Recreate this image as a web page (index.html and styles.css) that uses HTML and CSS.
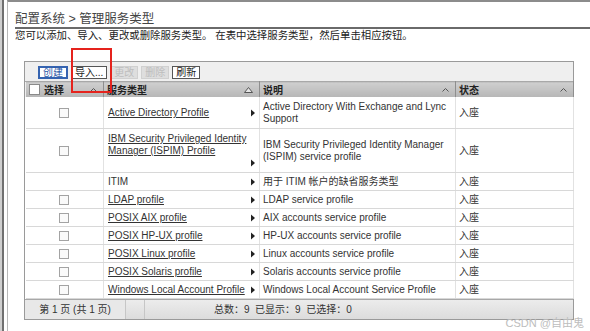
FILE: index.html
```html
<!DOCTYPE html>
<html lang="zh-CN">
<head>
    <meta charset="UTF-8">
    <meta name="viewport" content="width=device-width, initial-scale=1.0">
    <title>管理服务类型</title>
    <link rel="stylesheet" href="styles.css">
</head>
<body>
    <div class="window">
        <div class="frame">
            <div class="pane">
                <h1 class="crumb">配置系统 &gt; 管理服务类型</h1>
                <p class="intro">您可以添加、导入、更改或删除服务类型。 在表中选择服务类型，然后单击相应按钮。</p>

                <div class="services">
                    <div class="toolbar">
                        <button class="btn primary" type="button">创建</button>
                        <button class="btn" type="button">导入...</button>
                        <button class="btn" type="button" disabled>更改</button>
                        <button class="btn" type="button" disabled>删除</button>
                        <button class="btn" type="button">刷新</button>
                    </div>

                    <table class="grid">
                        <colgroup>
                            <col class="c-select">
                            <col class="c-type">
                            <col class="c-desc">
                            <col class="c-state">
                        </colgroup>
                        <thead>
                            <tr>
                                <th><div class="head"><span class="box head-box"></span><span class="head-label">选择</span><svg class="caret" width="7" height="4" viewBox="0 0 7 4"><polyline points="0.5,3.5 3.5,0.5 6.5,3.5" fill="none" stroke="#555" stroke-width="1"/></svg></div></th>
                                <th><div class="head"><span class="head-label">服务类型</span><svg class="caret" width="9" height="6" viewBox="0 0 9 6"><polygon points="0.5,5.5 4.5,0.5 8.5,5.5" fill="#e6e6e6" stroke="#555" stroke-width="1"/></svg></div></th>
                                <th><div class="head"><span class="head-label">说明</span><svg class="caret" width="7" height="4" viewBox="0 0 7 4"><polyline points="0.5,3.5 3.5,0.5 6.5,3.5" fill="none" stroke="#555" stroke-width="1"/></svg></div></th>
                                <th><div class="head"><span class="head-label">状态</span><svg class="caret" width="7" height="4" viewBox="0 0 7 4"><polyline points="0.5,3.5 3.5,0.5 6.5,3.5" fill="none" stroke="#555" stroke-width="1"/></svg></div></th>
                            </tr>
                        </thead>
                        <tbody>
                            <tr class="tall">
                                <td class="pick"><span class="box"></span></td>
                                <td><div class="type"><a href="#">Active Directory Profile</a><svg class="more" width="4" height="12" viewBox="0 0 4 7"><polygon points="0,0 4,3.5 0,7" fill="#222"/></svg></div></td>
                                <td>Active Directory With Exchange and Lync Support</td>
                                <td>入座</td>
                            </tr>
                            <tr class="tall">
                                <td class="pick"><span class="box"></span></td>
                                <td><div class="type"><a href="#">IBM Security Privileged Identity Manager (ISPIM) Profile</a><svg class="more" width="4" height="12" viewBox="0 0 4 7"><polygon points="0,0 4,3.5 0,7" fill="#222"/></svg></div></td>
                                <td>IBM Security Privileged Identity Manager (ISPIM) service profile</td>
                                <td>入座</td>
                            </tr>
                            <tr>
                                <td class="pick"></td>
                                <td><div class="type"><span>ITIM</span><svg class="more" width="4" height="12" viewBox="0 0 4 7"><polygon points="0,0 4,3.5 0,7" fill="#222"/></svg></div></td>
                                <td>用于 ITIM 帐户的缺省服务类型</td>
                                <td>入座</td>
                            </tr>
                            <tr>
                                <td class="pick"><span class="box"></span></td>
                                <td><div class="type"><a href="#">LDAP profile</a><svg class="more" width="4" height="12" viewBox="0 0 4 7"><polygon points="0,0 4,3.5 0,7" fill="#222"/></svg></div></td>
                                <td>LDAP service profile</td>
                                <td>入座</td>
                            </tr>
                            <tr>
                                <td class="pick"><span class="box"></span></td>
                                <td><div class="type"><a href="#">POSIX AIX profile</a><svg class="more" width="4" height="12" viewBox="0 0 4 7"><polygon points="0,0 4,3.5 0,7" fill="#222"/></svg></div></td>
                                <td>AIX accounts service profile</td>
                                <td>入座</td>
                            </tr>
                            <tr>
                                <td class="pick"><span class="box"></span></td>
                                <td><div class="type"><a href="#">POSIX HP-UX profile</a><svg class="more" width="4" height="12" viewBox="0 0 4 7"><polygon points="0,0 4,3.5 0,7" fill="#222"/></svg></div></td>
                                <td>HP-UX accounts service profile</td>
                                <td>入座</td>
                            </tr>
                            <tr>
                                <td class="pick"><span class="box"></span></td>
                                <td><div class="type"><a href="#">POSIX Linux profile</a><svg class="more" width="4" height="12" viewBox="0 0 4 7"><polygon points="0,0 4,3.5 0,7" fill="#222"/></svg></div></td>
                                <td>Linux accounts service profile</td>
                                <td>入座</td>
                            </tr>
                            <tr>
                                <td class="pick"><span class="box"></span></td>
                                <td><div class="type"><a href="#">POSIX Solaris profile</a><svg class="more" width="4" height="12" viewBox="0 0 4 7"><polygon points="0,0 4,3.5 0,7" fill="#222"/></svg></div></td>
                                <td>Solaris accounts service profile</td>
                                <td>入座</td>
                            </tr>
                            <tr>
                                <td class="pick"><span class="box"></span></td>
                                <td><div class="type"><a href="#">Windows Local Account Profile</a><svg class="more" width="4" height="12" viewBox="0 0 4 7"><polygon points="0,0 4,3.5 0,7" fill="#222"/></svg></div></td>
                                <td>Windows Local Account Service Profile</td>
                                <td>入座</td>
                            </tr>
                        </tbody>
                    </table>

                    <div class="pager">
                        <span class="page-no">第 1 页 (共 1 页)</span>
                        <span class="pager-gap"></span>
                        <span class="totals">总数：9&nbsp;&nbsp;已显示：9&nbsp;&nbsp;已选择：0</span>
                    </div>
                </div>
            </div>
        </div>

        <!-- annotation box drawn over the import button -->
        <div class="highlight"></div>
        <div class="watermark">CSDN @自由鬼</div>
    </div>
</body>
</html>
```

FILE: styles.css
```css
body {
    margin: 0;
    font-family: "Liberation Sans", Arial, "Noto Sans CJK SC", sans-serif;
    color: #333;
    background-color: #fff;
}
.window {
    position: relative;
    height: 331px;
    overflow: hidden;
    display: flex;
    border-left: 2px solid #cfcfcf;
    box-sizing: border-box;
}
.frame {
    flex: 1;
    display: flex;
    border-left: 2px solid #707070;
    padding-left: 3px;
}
.pane {
    flex: 1;
    border-left: 1px solid #b8b8b8;
    border-top: 2px solid #8c8c8c;
    padding: 10px 0 0 7px;
}
.crumb {
    margin: 0;
    font-size: 12.5px;
    font-weight: normal;
    line-height: 15px;
    color: #444;
    border-bottom: 2px solid #6a6a6a;
}
.intro {
    margin: 0;
    font-size: 10.4px;
    line-height: 13px;
    color: #222;
}
.services {
    width: 548px;
    margin: 19px 0 0 9px;
    border: 1px solid #9a9a9a;
}
.toolbar {
    display: flex;
    gap: 3px;
    padding: 4px 0 2px 13px;
    background-color: #efefef;
}
.btn {
    height: 13px;
    box-sizing: border-box;
    font-family: inherit;
    font-size: 10px;
    line-height: 9px;
    padding: 0 3px;
    margin: 0;
    background-color: #fff;
    color: #222;
    border: 1px solid #555;
    border-radius: 0;
    cursor: pointer;
}
.btn.primary {
    border: 2px solid #3563b0;
    color: #2d5aa6;
}
.btn:disabled {
    background-color: #dedede;
    color: #bdbdbd;
    border-color: #d0d0d0;
    cursor: default;
}
.grid {
    width: 100%;
    border-collapse: collapse;
    table-layout: fixed;
    font-size: 10px;
}
.c-select { width: 78px; }
.c-type { width: 156px; }
.c-desc { width: 196px; }
.c-state { width: 118px; }
.grid th {
    height: 15px;
    padding: 0 3px;
    text-align: left;
    background: linear-gradient(#cfcfcf, #b6b6b6);
    border-left: 1px solid #efefef;
    border-right: 1px solid #8e8e8e;
    border-top: 1px solid #a8a8a8;
}
.head {
    display: flex;
    align-items: center;
    gap: 4px;
}
.head-label {
    flex: 1;
    font-weight: bold;
    color: #222;
}
.caret {
    margin-right: 3px;
}
.grid td {
    padding: 3px 3px 2px;
    line-height: 12px;
    vertical-align: middle;
    border-bottom: 1px solid #d8d8d8;
    border-right: 1px solid #e2e2e2;
}
.grid tr.tall td {
    padding-top: 4px;
    padding-bottom: 3px;
}
.grid td.pick {
    text-align: center;
    font-size: 0;
}
.box {
    display: inline-block;
    width: 8px;
    height: 8px;
    border: 1px solid #a3a3a3;
    background-color: #fafafa;
    vertical-align: middle;
}
.head-box {
    width: 9px;
    height: 9px;
    background-color: #fff;
    border-color: #8a8a8a;
}
.type {
    display: flex;
    flex-wrap: wrap;
    align-items: center;
    padding-left: 1px;
}
.type a {
    color: #333;
    text-decoration: underline;
}
.more {
    margin-left: auto;
    margin-right: 1px;
}
.pager {
    display: flex;
    height: 19px;
    line-height: 19px;
    font-size: 10px;
    background: linear-gradient(#ececec, #dcdcdc);
    border-top: 1px solid #a8a8a8;
}
.page-no {
    width: 100px;
    text-align: center;
    background-color: #e8e8e8;
    border-right: 1px solid #c6c6c6;
}
.pager-gap {
    width: 18px;
    border-right: 1px solid #c6c6c6;
}
.totals {
    padding-left: 69px;
}
.highlight {
    position: absolute;
    left: 69px;
    top: 48px;
    width: 41px;
    height: 45px;
    border: 2px solid #e5231d;
    box-sizing: border-box;
}
.watermark {
    position: absolute;
    right: 6px;
    bottom: 1px;
    font-size: 11px;
    color: #bdbdbd;
}
```
